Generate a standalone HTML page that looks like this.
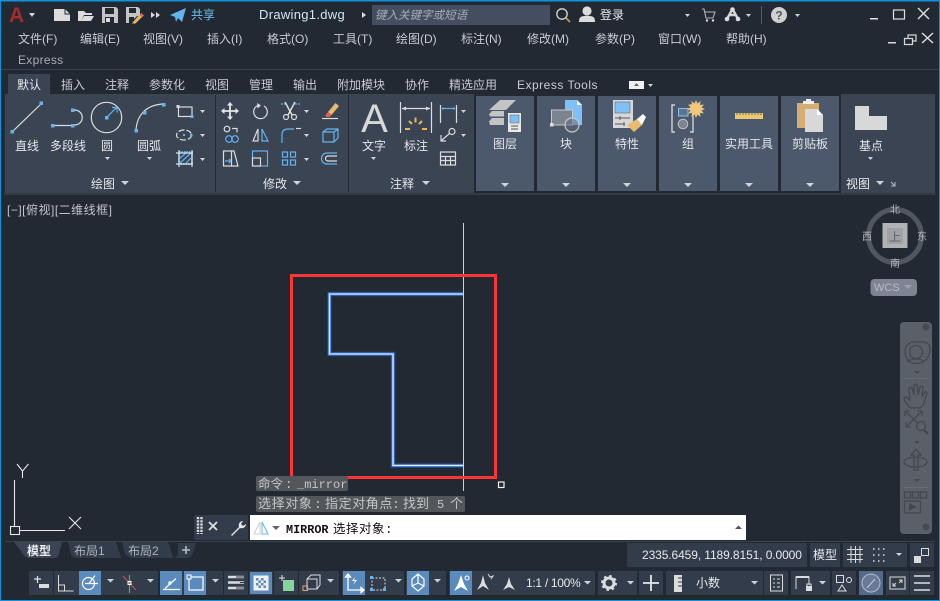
<!DOCTYPE html>
<html><head><meta charset="utf-8"><style>
html,body{margin:0;padding:0;background:#222933;width:940px;height:601px;overflow:hidden}
svg{display:block}
text{font-family:"Liberation Sans","Noto Sans CJK SC",sans-serif;font-size:12px;fill:#c8ccd2}
.w{fill:#e8eaec}
.c{text-anchor:middle;fill:#e4e6e9}
.m{font-family:"Liberation Mono","Noto Sans CJK SC",monospace}
.l{fill:none;stroke:#dcdcdc;stroke-width:1.2}
.b{fill:none;stroke:#62b4f2;stroke-width:1.2}
.f{fill:#dcdcdc}
.s{fill:#62b4f2}
.a{fill:#cfd2d6}
.n{fill:none;stroke:#43484e;stroke-width:1.3}
</style></head><body>
<svg width="940" height="601" viewBox="0 0 940 601" xmlns="http://www.w3.org/2000/svg">
<rect width="940" height="601" fill="#222933"/>
<!-- title -->
<text x="9" y="22" style="font-size:21px;font-weight:bold;fill:#a42c2c">A</text>
<path d="M29 13h6l-3 4z" class="a"/>
<path d="M54 9h11l5 5v7H54z" class="f"/><path d="M65 9v5h5" fill="none" stroke="#222933"/>
<path d="M78 21V11h6l2 2h6v2h-8l-3 6zM81 21l3-5h10l-3 5z" class="f"/>
<path d="M102 7h14l2 2v14h-16z" fill="#c4c4c4"/><rect x="105" y="8" width="9" height="6" fill="#222933"/><rect x="105" y="17" width="9" height="6" fill="#222933"/><rect x="106" y="18" width="4" height="4" fill="#ddd"/>
<path d="M126 7h12l2 2v7h-3l-5 5v2h-6z" fill="#c4c4c4"/><rect x="129" y="8" width="7" height="5" fill="#222933"/><rect x="129" y="17" width="5" height="6" fill="#222933"/><path d="M133 22l7-8 2.500 2.500-7 7-3.500 0z" fill="#e8b868"/><path d="M139.500 15l2-2 2.500 2.500-2 2z" fill="#e06a5a"/>
<path d="M151 12l4 3-4 3zM156 12l4 3-4 3z" class="f"/>
<path d="M170 15l16-7-4 14-4-4-2 4-1-5z" fill="#62b4f2"/>
<text x="191" y="19" style="fill:#6cc0f5">共享</text>
<text x="259" y="19" style="font-size:13px;fill:#cfe6f7;letter-spacing:.3px">Drawing1.dwg</text>
<path d="M362 12l4 3-4 3z" class="f"/>
<rect x="372" y="5" width="178" height="20" fill="#454e60"/>
<text x="375" y="19" style="font-style:italic;font-size:11.500px;fill:#a9adb5">键入关键字或短语</text>
<circle cx="562" cy="14" r="5.200" fill="none" stroke="#d6d6d6" stroke-width="1.300"/><path d="M566 18l4 4" stroke="#c09a50" stroke-width="1.800"/>
<circle cx="587" cy="11" r="4.600" class="f"/><path d="M579 22c0-6 3-6 8-6s8 0 8 6z" class="f"/>
<text x="600" y="19" class="w">登录</text>
<path d="M685 14h5l-2.500 3z" class="a"/>
<path d="M702 9h2l2 9h7l2-6h-10" fill="none" stroke="#b4b4b4" stroke-width="1.100"/><circle cx="707" cy="20.500" r="1.200" class="f"/><circle cx="713" cy="20.500" r="1.200" class="f"/>
<path d="M732.500 9l-5.500 10M732.500 9l5.500 10M729 15h7" stroke="#d6d6d6" stroke-width="2.400" fill="none"/><circle cx="727" cy="19" r="2.300" class="f"/><circle cx="738" cy="19" r="2.300" class="f"/><circle cx="732.500" cy="9.500" r="2.300" class="f"/>
<path d="M746 14h5l-2.500 3z" class="a"/>
<rect x="761" y="6" width="1" height="18" fill="#555d6a"/>
<circle cx="779" cy="15" r="8" fill="#d0d0d0"/><text x="779" y="19.500" style="font-size:12px;font-weight:bold;fill:#555;text-anchor:middle">?</text>
<path d="M795 14h5l-2.500 3z" class="a"/>
<rect x="870" y="18" width="8" height="1.500" fill="#e0e0e0"/>
<rect x="893.500" y="10" width="11" height="9" fill="none" stroke="#e0e0e0" stroke-width="1.200"/>
<path d="M918 8l11 11M929 8l-11 11" stroke="#e0e0e0" stroke-width="1.400"/>
<!-- menu -->
<text x="18" y="43">文件(F)</text><text x="80" y="43">编辑(E)</text><text x="143" y="43">视图(V)</text><text x="207" y="43">插入(I)</text><text x="267" y="43">格式(O)</text><text x="333" y="43">工具(T)</text><text x="396" y="43">绘图(D)</text><text x="461" y="43">标注(N)</text><text x="527" y="43">修改(M)</text><text x="595" y="43">参数(P)</text><text x="658" y="43">窗口(W)</text><text x="726" y="43">帮助(H)</text>
<text x="18" y="64" style="fill:#a8adb5;letter-spacing:.3px">Express</text>
<rect x="888" y="42" width="8" height="1.500" fill="#d8d8d8"/>
<path d="M904.500 38.500h8v6h-8zM908 38.500v-3.500h8v6h-3.500" fill="#222933" stroke="#d8d8d8" stroke-width="1.200"/>
<path d="M922 33l11 10M933 33l-11 10" stroke="#e0e0e0" stroke-width="1.400"/>
<rect x="1" y="69" width="938" height="1" fill="#3a4250"/>
<!-- tabs -->
<rect x="8" y="74" width="42" height="21" fill="#3b4453"/>
<text x="17" y="89" class="w">默认</text><text x="61" y="89">插入</text><text x="105" y="89">注释</text><text x="149" y="89">参数化</text><text x="205" y="89">视图</text><text x="249" y="89">管理</text><text x="293" y="89">输出</text><text x="337" y="89">附加模块</text><text x="405" y="89">协作</text><text x="449" y="89">精选应用</text><text x="517" y="89" style="letter-spacing:.5px">Express Tools</text>
<rect x="629" y="81" width="15" height="8" fill="#f0f0f0"/><path d="M634 86l2.500-3 2.500 3z" fill="#666"/>
<path d="M648 84h5l-2.500 3z" class="a"/>
<!-- ribbon -->
<rect x="5" y="94" width="930" height="99" fill="#3b4453"/>
<rect x="215" y="95" width="1" height="97" fill="#222933"/><rect x="348" y="95" width="1" height="97" fill="#222933"/>
<rect x="474" y="94" width="367" height="99" fill="#222933"/>
<g fill="#4c586b"><rect x="476" y="96" width="58" height="95"/><rect x="537" y="96" width="58" height="95"/><rect x="598" y="96" width="58" height="95"/><rect x="659" y="96" width="58" height="95"/><rect x="720" y="96" width="58" height="95"/><rect x="781" y="96" width="58" height="95"/></g>
<rect x="841" y="94" width="94" height="99" fill="#3b4453"/>
<rect x="4" y="193" width="932" height="2" fill="#333b47"/>
<!-- draw panel -->
<path d="M13 131l28-27" class="l"/><rect x="10.500" y="130" width="3.500" height="3.500" class="s"/><rect x="39.500" y="101.500" width="3.500" height="3.500" class="s"/>
<path d="M54 125.500h17M74 110c11 0 11 15 0 15" class="l"/><rect x="51" y="124" width="3.500" height="3.500" class="s"/><rect x="71" y="124" width="3.500" height="3.500" class="s"/><rect x="71" y="108.500" width="3.500" height="3.500" class="s"/>
<circle cx="106.500" cy="117.500" r="15.200" class="l"/><path d="M107 117l9-9M112 107.500h5v5" class="b"/><rect x="105" y="116" width="3.500" height="3.500" class="s"/>
<path d="M136 130c1-16 11-25 27-26" class="l"/><rect x="134.500" y="129" width="3.500" height="3.500" class="s"/><rect x="143" y="111" width="3.500" height="3.500" class="s"/><rect x="162" y="103" width="3.500" height="3.500" class="s"/>
<text x="27" y="150" class="c">直线</text><text x="68" y="150" class="c">多段线</text><text x="107" y="150" class="c">圆</text><text x="149" y="150" class="c">圆弧</text>
<path d="M105 157h5l-2.500 3zM147 157h5l-2.500 3z" class="a"/>
<rect x="178.500" y="107" width="13.500" height="9.500" class="l"/><rect x="176.500" y="105" width="3" height="3" class="f"/><rect x="190.500" y="115" width="3" height="3" class="s"/>
<path d="M200 110h5l-2.500 3zM200 134h5l-2.500 3zM200 158h5l-2.500 3zM304 110h5l-2.500 3zM304 134h5l-2.500 3zM304 158h5l-2.500 3z" class="a"/>
<ellipse cx="184" cy="135" rx="7.500" ry="5" class="l" stroke-dasharray="6 2"/><rect x="183" y="134" width="2" height="2" class="s"/><rect x="190" y="134" width="2.500" height="2.500" class="s"/>
<rect x="179" y="152" width="13" height="12" fill="none" stroke="#62b4f2" stroke-width="2" stroke-dasharray="1.500 1"/><path d="M180 163l11-10M180 158l6-5M186 163l5-5" class="b"/><path d="M176 153h17M176 164h17M179 150v17M192 150v17" class="l"/>
<text x="103" y="188" class="c">绘图</text><path d="M121 181h8l-4 4z" class="a"/>
<!-- modify -->
<path d="M230 103v16M222 111h16" stroke="#e6e6e6" stroke-width="1.800"/><path d="M230 102l-3 3.500h6zM230 120l-3-3.500h6zM221 111l3.500-3v6zM239 111l-3.500-3v6z" fill="#e6e6e6"/>
<path d="M264 106a6.800 6.800 0 1 1-6-.5" class="l"/><path d="M257 103l4 2.500-3.500 3z" class="f"/>
<path d="M281 104h6M295 104h6" stroke="#62b4f2" stroke-width="1.200" stroke-dasharray="2 1"/><path d="M285 102l7 13M295 102l-7 13" stroke="#dcdcdc" stroke-width="1.500"/><circle cx="286" cy="117" r="2.500" class="l"/><circle cx="294" cy="117" r="2.500" class="l"/>
<path d="M328 112l7.500-9 3.500 3-7.500 9z" fill="#e8bc70"/><path d="M328 112l3.500 3-2 2h-3.500l-.5-2z" fill="#e0604a"/><path d="M322 118.500h16" class="l"/>
<circle cx="227" cy="129" r="2.800" class="l"/><path d="M232 128.500h5v4" class="l"/><circle cx="229" cy="139" r="3.300" class="b"/><circle cx="235" cy="139" r="3.300" class="b"/>
<path d="M258 129v12h-5z" class="l"/><path d="M262 129v12h6z" class="b"/>
<path d="M282 143v-8q0-6 6-6h6" class="b"/><path d="M296 128.500h5" class="l"/>
<path d="M323 132h11v10h-11zM323 132l4-3h11v9l-4 4M334 132l4-3" class="b"/>
<rect x="223.500" y="151" width="8" height="15" class="l"/><path d="M231 151h3l4 15h-7" class="l"/><path d="M225 161h6M229 159l2 2-2 2" class="b"/>
<rect x="252.500" y="151" width="15" height="15" class="b"/><rect x="252.500" y="158" width="8" height="8" fill="#3b4453" stroke="#dcdcdc" stroke-width="1.200"/>
<g class="b"><rect x="282.500" y="152" width="5" height="5"/><rect x="290.500" y="152" width="5" height="5"/><rect x="282.500" y="160" width="5" height="5"/><rect x="290.500" y="160" width="5" height="5"/></g>
<path d="M337 153h-10a5 5 0 0 0 0 11h10" class="b"/><path d="M337 156h-9a2.500 2.500 0 0 0 0 5h9" class="l"/>
<text x="275" y="188" class="c">修改</text><path d="M293 181h8l-4 4z" class="a"/>
<!-- annotate -->
<text x="374.500" y="132" style="font-size:40px;fill:#d8d8d8;text-anchor:middle">A</text>
<text x="374" y="150" class="c">文字</text><path d="M371 157h5l-2.500 3z" class="a"/>
<path d="M400.500 102v31M431.500 102v31" class="l"/><path d="M402 108.500h28" class="l"/><path d="M402 108.500l4-2v4zM430 108.500l-4-2v4z" class="f"/>
<path d="M415.500 117.500v5M409 121l3 3M422 121l-3 3M405 129h5M422 129h5" stroke="#eab94e" stroke-width="2" fill="none"/>
<text x="416" y="150" class="c">标注</text>
<path d="M440.500 105v18M456.500 105v18" class="l"/><path d="M442 108.500h13" stroke="#62b4f2" stroke-width="1.200"/>
<path d="M445 108.500l-2.500-1.500v3zM452 108.500l2.500-1.500v3z" class="s"/>
<path d="M461 110h5l-2.500 3zM461 134h5l-2.500 3z" class="a"/>
<circle cx="452" cy="131.500" r="3" class="l"/><path d="M449.500 133.500l-8 7" class="l"/><path d="M441 135v6h5" class="l"/>
<path d="M440.500 152h15v13h-15zM440.500 156.500h15M440.500 160.500h15M445.500 156.500v8.500M450.500 156.500v8.500" class="l"/>
<text x="402" y="188" class="c">注释</text><path d="M422 181h8l-4 4z" class="a"/>
<!-- layer -->
<path d="M500 100h16l-10 10h-17z" fill="#c4c4c4"/><path d="M492 111l-3 3.500 1 2h14v-5.500z" fill="#c4c4c4"/><path d="M492 118l-3 3.500 1 3.500h14v-7z" fill="#c4c4c4"/>
<rect x="508" y="113" width="13" height="19" fill="#e8e8e8"/><rect x="510" y="115" width="9" height="8" fill="#7ec2f4" stroke="#555" stroke-width=".5"/><path d="M511 126h7M511 129h7" stroke="#555" stroke-width="1"/>
<text x="505" y="148" class="c">图层</text><path d="M501 183h8l-4 4z" class="a"/>
<!-- block -->
<path d="M565 100h12l5 5v20h-17z" fill="#7fc1f6"/><path d="M577 100l5 5h-5z" fill="#fff"/>
<rect x="551.500" y="110" width="21" height="15" fill="#7d8491" stroke="#c8c8c8" stroke-width="1"/><circle cx="572" cy="125" r="7" fill="#5f6878" fill-opacity=".5" stroke="#c8c8c8" stroke-width="1.200"/><rect x="550" y="123" width="3.500" height="3.500" class="f"/>
<text x="566" y="148" class="c">块</text><path d="M562 183h8l-4 4z" class="a"/>
<!-- props -->
<rect x="613" y="100" width="20" height="28" fill="#d8d8d8"/><rect x="615" y="102" width="15" height="11" fill="#7fc1f6" stroke="#555" stroke-width=".5"/><path d="M615 118h15M615 124h10M620 116v4M624 122v4" stroke="#555" stroke-width="1"/>
<path d="M627 125l10-6 5 6-8 7z" fill="#e8bc70"/><path d="M637 119l6-5 3 3-4 8z" fill="#fff"/>
<text x="627" y="148" class="c">特性</text><path d="M623 183h8l-4 4z" class="a"/>
<!-- group -->
<path d="M675 105h-3v27h3M690 105h3v27h-3" fill="none" stroke="#e8e8e8" stroke-width="1.200"/>
<rect x="678.500" y="108.500" width="9.500" height="7.500" fill="#5d7690" stroke="#7fc1f6" stroke-width="1"/><circle cx="683" cy="124" r="4.800" fill="#7d8491" stroke="#c0c0c0"/>
<path d="M696 100l1.500 3.500 3-2.500-.5 4 4-.5-2.500 3 3.500 1.500-3.500 1.500 2.500 3-4-.5.5 4-3-2.500-1.500 3.500-1.500-3.500-3 2.500.5-4-4 .5 2.500-3-3.500-1.500 3.500-1.500-2.500-3 4 .5-.5-4 3 2.500z" fill="#f0c878"/>
<text x="688" y="148" class="c">组</text><path d="M684 183h8l-4 4z" class="a"/>
<!-- util -->
<rect x="735" y="113" width="28" height="6" fill="#eec76f"/><path d="M737 113v2M740 113v2M743 113v2M746 113v2M749 113v2M752 113v2M755 113v2M758 113v2M761 113v2" stroke="#4c586b" stroke-width=".8"/>
<text x="749" y="148" class="c">实用工具</text><path d="M745 183h8l-4 4z" class="a"/>
<!-- clip -->
<rect x="797" y="103" width="22" height="25" fill="#d6ae74"/><path d="M803 101h11v3h-11z" fill="#eee"/><path d="M806 99h5v3h-5z" fill="#eee"/>
<path d="M805 109h12l6 6v17h-18z" fill="#d8d8d8"/><path d="M817 109l6 6h-6z" fill="#fff"/>
<text x="810" y="148" class="c">剪贴板</text><path d="M806 183h8l-4 4z" class="a"/>
<!-- base -->
<path d="M855 106h14v10h18v14h-32z" fill="#d8d8d8"/>
<text x="871" y="150" class="c">基点</text><path d="M868 157h5l-2.500 3z" class="a"/>
<text x="846" y="188" class="w">视图</text><path d="M876 181h8l-4 4z" class="a"/><path d="M891 182l4 4M895 182v4h-4" stroke="#b8bcc2" fill="none"/>
<!-- viewport -->
<text x="7" y="214" style="font-size:12px;fill:#c0c4ca;letter-spacing:.5px">[−][俯视][二维线框]</text>
<path d="M463 294H329.500V354H393V465.500H463" fill="none" stroke="#2a5fc8" stroke-width="4.500" opacity=".55"/>
<path d="M463 294H329.500V354H393V465.500H463" fill="none" stroke="#5f97f2" stroke-width="2.600"/>
<path d="M463 294H329.500V354H393V465.500H463" fill="none" stroke="#dbe9ff" stroke-width="1.100"/>
<path d="M463.500 223V491" stroke="#cfd3d8" stroke-width="1"/>
<rect x="291.500" y="275.500" width="204" height="202" fill="none" stroke="#ff3535" stroke-width="3"/>
<rect x="498.500" y="482" width="5.500" height="5.500" fill="none" stroke="#f0f0f0" stroke-width="1.200"/>
<!-- viewcube -->
<circle cx="895" cy="236" r="26.500" fill="none" stroke="#50575f" stroke-width="5"/>
<rect x="882.500" y="223" width="25" height="25" fill="#b0b2b4"/><rect x="887" y="228" width="16" height="16" fill="#9ea2a4"/>
<text x="895" y="241" style="font-size:12px;fill:#5c6268;text-anchor:middle">上</text>
<text x="895" y="213" style="font-size:10px;text-anchor:middle;fill:#b4b8bc">北</text><text x="895" y="267" style="font-size:10px;text-anchor:middle;fill:#b4b8bc">南</text><text x="867" y="240" style="font-size:10px;text-anchor:middle;fill:#b4b8bc">西</text><text x="922" y="240" style="font-size:10px;text-anchor:middle;fill:#b4b8bc">东</text>
<rect x="870.500" y="279" width="46.500" height="17" rx="4" fill="#7f8494"/><text x="874" y="291" style="font-size:11px;fill:#b8bcc4">WCS</text><path d="M904 285h8l-4 4z" fill="#9ca1ac"/>
<!-- nav bar -->
<rect x="900" y="322" width="32" height="212" rx="4" fill="#5a6067"/>
<circle cx="926" cy="327" r="3.500" fill="#464b52"/>
<path d="M905 352c0-5 2-9 8-10h9c6 0 8 3 8 7 0 6-2 10-7 13-4 2-10 2-13 0-3-3-5-6-5-10z" class="n"/><circle cx="916" cy="352" r="6.500" class="n"/><path d="M908 362c2-4 14-4 16 0" class="n"/>
<path d="M914 371h6l-3 3zM914 441h6l-3 3zM914 479h6l-3 3z" fill="#43484e"/>
<rect x="903" y="378" width="26" height="1" fill="#676c73"/><rect x="903" y="487" width="26" height="1" fill="#676c73"/>
<path d="M908 405c-2-2-4-4-4-7l1-1c2 0 3 2 5 3l-1-11c0-2 2-2 3-1l2 7 0-10c0-1 3-1 3 0l1 10 2-8c1-1 3-1 3 0l-1 10 3-5c1-1 2 0 2 1l-3 10c-1 3-3 5-5 5h-9z" class="n"/>
<path d="M905 411l16 15M922 411l-16 16M905 411v5M905 411h5M922 411v5M922 411h-5M906 427v-5M906 427h5" class="n"/><circle cx="921" cy="426" r="4.500" fill="#5a6067" stroke="#43484e" stroke-width="1.300"/><path d="M924 430l4 4" stroke="#43484e" stroke-width="2.200"/>
<path d="M916 449l-5 6h3v15h4v-15h3z" class="n"/><ellipse cx="915.500" cy="462" rx="11.500" ry="5" class="n"/>
<rect x="904.500" y="492" width="6" height="6" class="n"/><rect x="912.500" y="492" width="6" height="6" class="n"/><rect x="920.500" y="492" width="6" height="6" class="n"/>
<rect x="904.500" y="501" width="16" height="12" class="n"/><path d="M909 503l8 4-8 4z" fill="#43484e"/>
<circle cx="926" cy="527" r="3.500" fill="#464b52"/>
<!-- UCS -->
<path d="M14.500 480V526M20 530.500H65" stroke="#e6e6e6" stroke-width="1.100" fill="none"/>
<rect x="10.500" y="526.500" width="9" height="8" fill="none" stroke="#e6e6e6" stroke-width="1.100"/>
<path d="M17 464l5.500 7 6-7M22.500 471v7" stroke="#e6e6e6" stroke-width="1.100" fill="none"/>
<path d="M69 517l12 12M81 517l-12 12" stroke="#e6e6e6" stroke-width="1.100" fill="none"/>
<!-- history -->
<rect x="256" y="476" width="92" height="15" rx="2" fill="#53575c"/>
<rect x="256" y="496" width="209" height="16" rx="2" fill="#53575c"/>
<text y="488" class="m" style="fill:#c4c6c8;font-size:12.500px"><tspan x="258">命令</tspan><tspan x="285">:</tspan><tspan x="297" style="font-size:12px">_mirror</tspan></text>
<text y="508" class="m" style="fill:#c4c6c8;font-size:13px"><tspan x="258" style="letter-spacing:.6px">选择对象</tspan><tspan x="314">:</tspan><tspan x="325" style="letter-spacing:.6px">指定对角点</tspan><tspan x="392">:</tspan><tspan x="403">找到</tspan><tspan x="437" style="font-size:12px">5</tspan><tspan x="450">个</tspan></text>
<!-- command -->
<rect x="194" y="515" width="54" height="25" rx="2" fill="#333c4a"/>
<path d="M198 517v17M201.500 517v17" stroke="#dcdcdc" stroke-width="2.400" stroke-dasharray="2.200 1"/>
<path d="M209 522l8 8M217 522l-8 8" stroke="#e0e0e0" stroke-width="1.800"/>
<path d="M231 535l8-8c-1-3 1-6 4-6l-2 3 2 2 3-2c0 3-3 5-6 4l-8 8z" fill="#e6e6e6"/>
<rect x="250" y="515" width="496" height="25" fill="#fff"/>
<path d="M260 522l-6 12h6z" fill="none" stroke="#ccc"/><path d="M262 522v12h6z" fill="none" stroke="#62b4f2"/>
<path d="M272 526h8l-4 4z" fill="#666"/>
<text x="286" y="533" class="m" style="fill:#111;font-weight:bold;font-size:11.800px">MIRROR</text>
<text x="333" y="533" class="m" style="fill:#111;font-size:12.500px;letter-spacing:.5px">选择对象:</text>
<path d="M735 529l3.500-3.500 3.500 3.500z" fill="#555"/>
<!-- layout tabs -->
<rect x="5" y="541" width="930" height="1" fill="#3a4250"/>
<path d="M14 542h48l-3 12q-1 4-5 4H30q-5 0-7-4z" fill="#3b4453"/>
<path d="M68 542h48l4 12q1 4 2 4H78q-6 0-7-4z" fill="#333c4a"/>
<path d="M122 542h46l4 12q1 4 2 4h-40q-6 0-9-4z" fill="#333c4a"/>
<path d="M178 543h18l-3 10q-2 5-6 5h-12q3-2 3-6z" fill="#333c4a"/>
<text x="27" y="555" class="w" style="font-weight:bold">模型</text>
<text x="74" y="555" style="fill:#aeb3ba">布局1</text><text x="128" y="555" style="fill:#aeb3ba">布局2</text>
<path d="M186 546v8M182 550h8" stroke="#b8bcc2" stroke-width="1.600"/>
<!-- status row 1 -->
<g fill="#333c4a"><rect x="627" y="543" width="180" height="24"/><rect x="810" y="543" width="30" height="24"/><rect x="843" y="543" width="64" height="24"/><rect x="910" y="543" width="24" height="24"/></g>
<text x="642" y="559" class="w" style="font-size:12px;letter-spacing:-.1px">2335.6459, 1189.8151, 0.0000</text>
<text x="813" y="559" class="w">模型</text>
<path d="M847 549.500h16M847 554.500h16M847 559.500h16M851 546v17M855.500 546v17M860 546v17" stroke="#dcdcdc" stroke-width="1"/>
<path d="M873 549h14M873 555h14M873 561h14" stroke="#dcdcdc" stroke-width="1.500" stroke-dasharray="1.500 3.500"/>
<path d="M896 553h6l-3 3z" class="a"/>
<path d="M914 556h7v7h-7z" class="f"/><rect x="921.500" y="548.500" width="7" height="7" fill="none" stroke="#dcdcdc"/>
<!-- status row 2 -->
<g fill="#333c4a"><rect x="29" y="571" width="24" height="24"/><rect x="54" y="571" width="104" height="24"/><rect x="160" y="571" width="63" height="24"/><rect x="224" y="571" width="24" height="24"/><rect x="249" y="571" width="24" height="24"/><rect x="274" y="571" width="24" height="24"/><rect x="299" y="571" width="40" height="24"/><rect x="342" y="571" width="62" height="24"/><rect x="406" y="571" width="40" height="24"/><rect x="449" y="571" width="146" height="24"/><rect x="598" y="571" width="39" height="24"/><rect x="639" y="571" width="24" height="24"/><rect x="666" y="571" width="97" height="24"/><rect x="764" y="571" width="24" height="24"/><rect x="791" y="571" width="39" height="24"/><rect x="832" y="571" width="24" height="24"/><rect x="859" y="571" width="24" height="24"/><rect x="886" y="571" width="23" height="24"/><rect x="910" y="571" width="24" height="24"/></g>
<g fill="#5b8bbd"><rect x="79" y="571" width="22" height="24"/><rect x="160" y="571" width="22" height="24"/><rect x="184" y="571" width="22" height="24"/><rect x="250" y="572" width="22" height="22"/><rect x="343" y="571" width="22" height="24"/><rect x="407" y="571" width="22" height="24"/><rect x="450" y="571" width="22" height="24"/></g>
<path d="M34 579h7M37.500 576v7" stroke="#e6e6e6" stroke-width="1.200"/><rect x="39" y="584" width="10" height="4" class="f"/>
<path d="M58.500 575v16h15M58.500 585h6v6" fill="none" stroke="#dcdcdc" stroke-width="1"/>
<circle cx="88.500" cy="583.500" r="6" fill="none" stroke="#fff" stroke-width="1.200"/><path d="M85 583.500h13M89 583.500l6-8" stroke="#fff" stroke-width="1.200"/>
<path d="M107 579h7l-3.500 3.500zM147 579h7l-3.500 3.500zM212 579h7l-3.500 3.500zM327 579h7l-3.500 3.500zM395 579h7l-3.500 3.500zM434 579h7l-3.500 3.500z" class="a"/>
<path d="M123 576l13 14" stroke="#d04a4a" stroke-width="1.200"/><path d="M129.500 575v18" stroke="#5bb05b" stroke-width="1.200"/><rect x="128" y="581.500" width="3" height="3" fill="none" stroke="#fff"/>
<path d="M163 589.500h17M165 588.500l11-10" stroke="#fff" stroke-width="1.200" fill="none"/><circle cx="170" cy="583" r="1.700" fill="#fff"/>
<rect x="189" y="577" width="14" height="13" fill="none" stroke="#fff" stroke-width="1.200"/><rect x="187" y="575" width="4" height="4" fill="#5b8bbd" stroke="#fff"/>
<path d="M228 577h16M228 582.500h16M228 588h16" stroke="#dcdcdc" stroke-width="2.400"/><path d="M236 577h8M240 582.500h4M236 588h8" stroke="#333c4a" stroke-width="1"/>
<rect x="253.500" y="575.500" width="15" height="15" fill="#f0f0f0"/><path d="M256 578h2.500v2.500H256zM261 578h2.500v2.500H261zM258.500 580.500H261V583h-2.500zM263.500 580.500H266V583h-2.500zM256 583h2.500v2.500H256zM261 583h2.500v2.500H261zM258.500 585.500H261V588h-2.500zM263.500 585.500H266V588h-2.500z" fill="#5b8bbd"/>
<path d="M279 578h6M282 575v6" stroke="#e6e6e6"/><rect x="283" y="580" width="11" height="11" fill="#86d49c"/>
<path d="M307 579h10v10h-10zM307 579l4-4h9v10l-3 4" fill="none" stroke="#dcdcdc"/><rect x="303" y="586" width="4.500" height="4.500" fill="none" stroke="#e8a070"/>
<path d="M348 574v16h16M348 574l-2.500 3h5zM364 590l-3-2.500v5z" fill="none" stroke="#fff" stroke-width="1.300"/><path d="M355 577l-3 4h3l-2 4 4-5h-3z" fill="#fff"/>
<rect x="372" y="578" width="13" height="12" fill="none" stroke="#dcdcdc" stroke-dasharray="2 1.500"/><rect x="370" y="576" width="3" height="3" class="s"/><rect x="383" y="588" width="3" height="3" class="s"/><rect x="370" y="588" width="3" height="3" class="s"/>
<path d="M418 574l-6 5v7l6 5 6-5v-7zM412 586l6-3 6 3M418 574v9" fill="none" stroke="#fff" stroke-width="1.200"/>
<path d="M461 575l-3 9-4 7 7-4 7 4-4-7z" fill="#fff"/><circle cx="467" cy="578" r="2" fill="none" stroke="#fff"/>
<path d="M483 575l-2 8-4 7 6-4 6 4-4-7z" fill="#dcdcdc"/><path d="M488 574l2 3 3-1-2 3" stroke="#dcdcdc" fill="none"/>
<path d="M509 577l-2 7-4 6 6-3 6 3-4-6z" fill="#dcdcdc"/>
<text x="526" y="587" class="w" style="letter-spacing:-.3px">1:1 / 100%</text>
<path d="M584 581h7l-3.500 3.500zM627 581h7l-3.500 3.500zM751 581h7l-3.500 3.500zM819 581h7l-3.500 3.500z" class="a"/>
<circle cx="609" cy="583" r="5" fill="none" stroke="#dcdcdc" stroke-width="3"/><circle cx="609" cy="583" r="7" fill="none" stroke="#dcdcdc" stroke-width="2" stroke-dasharray="2.500 3"/>
<path d="M651 575v16M643 583h16" stroke="#e6e6e6" stroke-width="1.800"/>
<path d="M674 575h8v17h-8z" class="f"/><path d="M678 578h4M678 582h4M678 586h4" stroke="#333c4a"/>
<text x="696" y="587" class="w">小数</text>
<rect x="770.500" y="575" width="12" height="16" fill="none" stroke="#dcdcdc"/><path d="M773 579h2M777 579h3M773 583h2M777 583h3M773 587h2M777 587h3" stroke="#dcdcdc"/>
<path d="M796 589v-12h13v8" fill="none" stroke="#dcdcdc"/><path d="M796 577h13" stroke="#dcdcdc" stroke-width="2"/><rect x="806" y="586" width="6" height="5" class="f"/><path d="M807 586v-2h4v2" fill="none" stroke="#dcdcdc"/>
<rect x="836.500" y="575.500" width="7" height="7" fill="none" stroke="#dcdcdc"/><circle cx="849" cy="580" r="2.500" fill="none" stroke="#dcdcdc"/><path d="M842 585l-4 6h8z" fill="none" stroke="#dcdcdc"/>
<rect x="859" y="571" width="24" height="24" fill="#536a8c"/><circle cx="871" cy="583" r="9" fill="#677a96" stroke="#b4bcc8"/><path d="M867 588l8-9" stroke="#c8ced8"/>
<rect x="890" y="577" width="15" height="12" fill="none" stroke="#dcdcdc"/><path d="M893 586l3-3M893 583v3h3M902 580l-3 3M899 580h3v3" stroke="#dcdcdc" fill="none"/>
<path d="M914 576h16M914 583h16M914 590h16" stroke="#e0e0e0" stroke-width="1.600"/>
<!-- border -->
<rect x="0" y="0" width="940" height="1.500" fill="#0f93dc"/><rect x="0" y="0" width="1" height="601" fill="#0f93dc"/><rect x="939" y="0" width="1" height="601" fill="#0f93dc"/><rect x="0" y="600" width="940" height="1" fill="#0f93dc"/>
</svg>
</body></html>
